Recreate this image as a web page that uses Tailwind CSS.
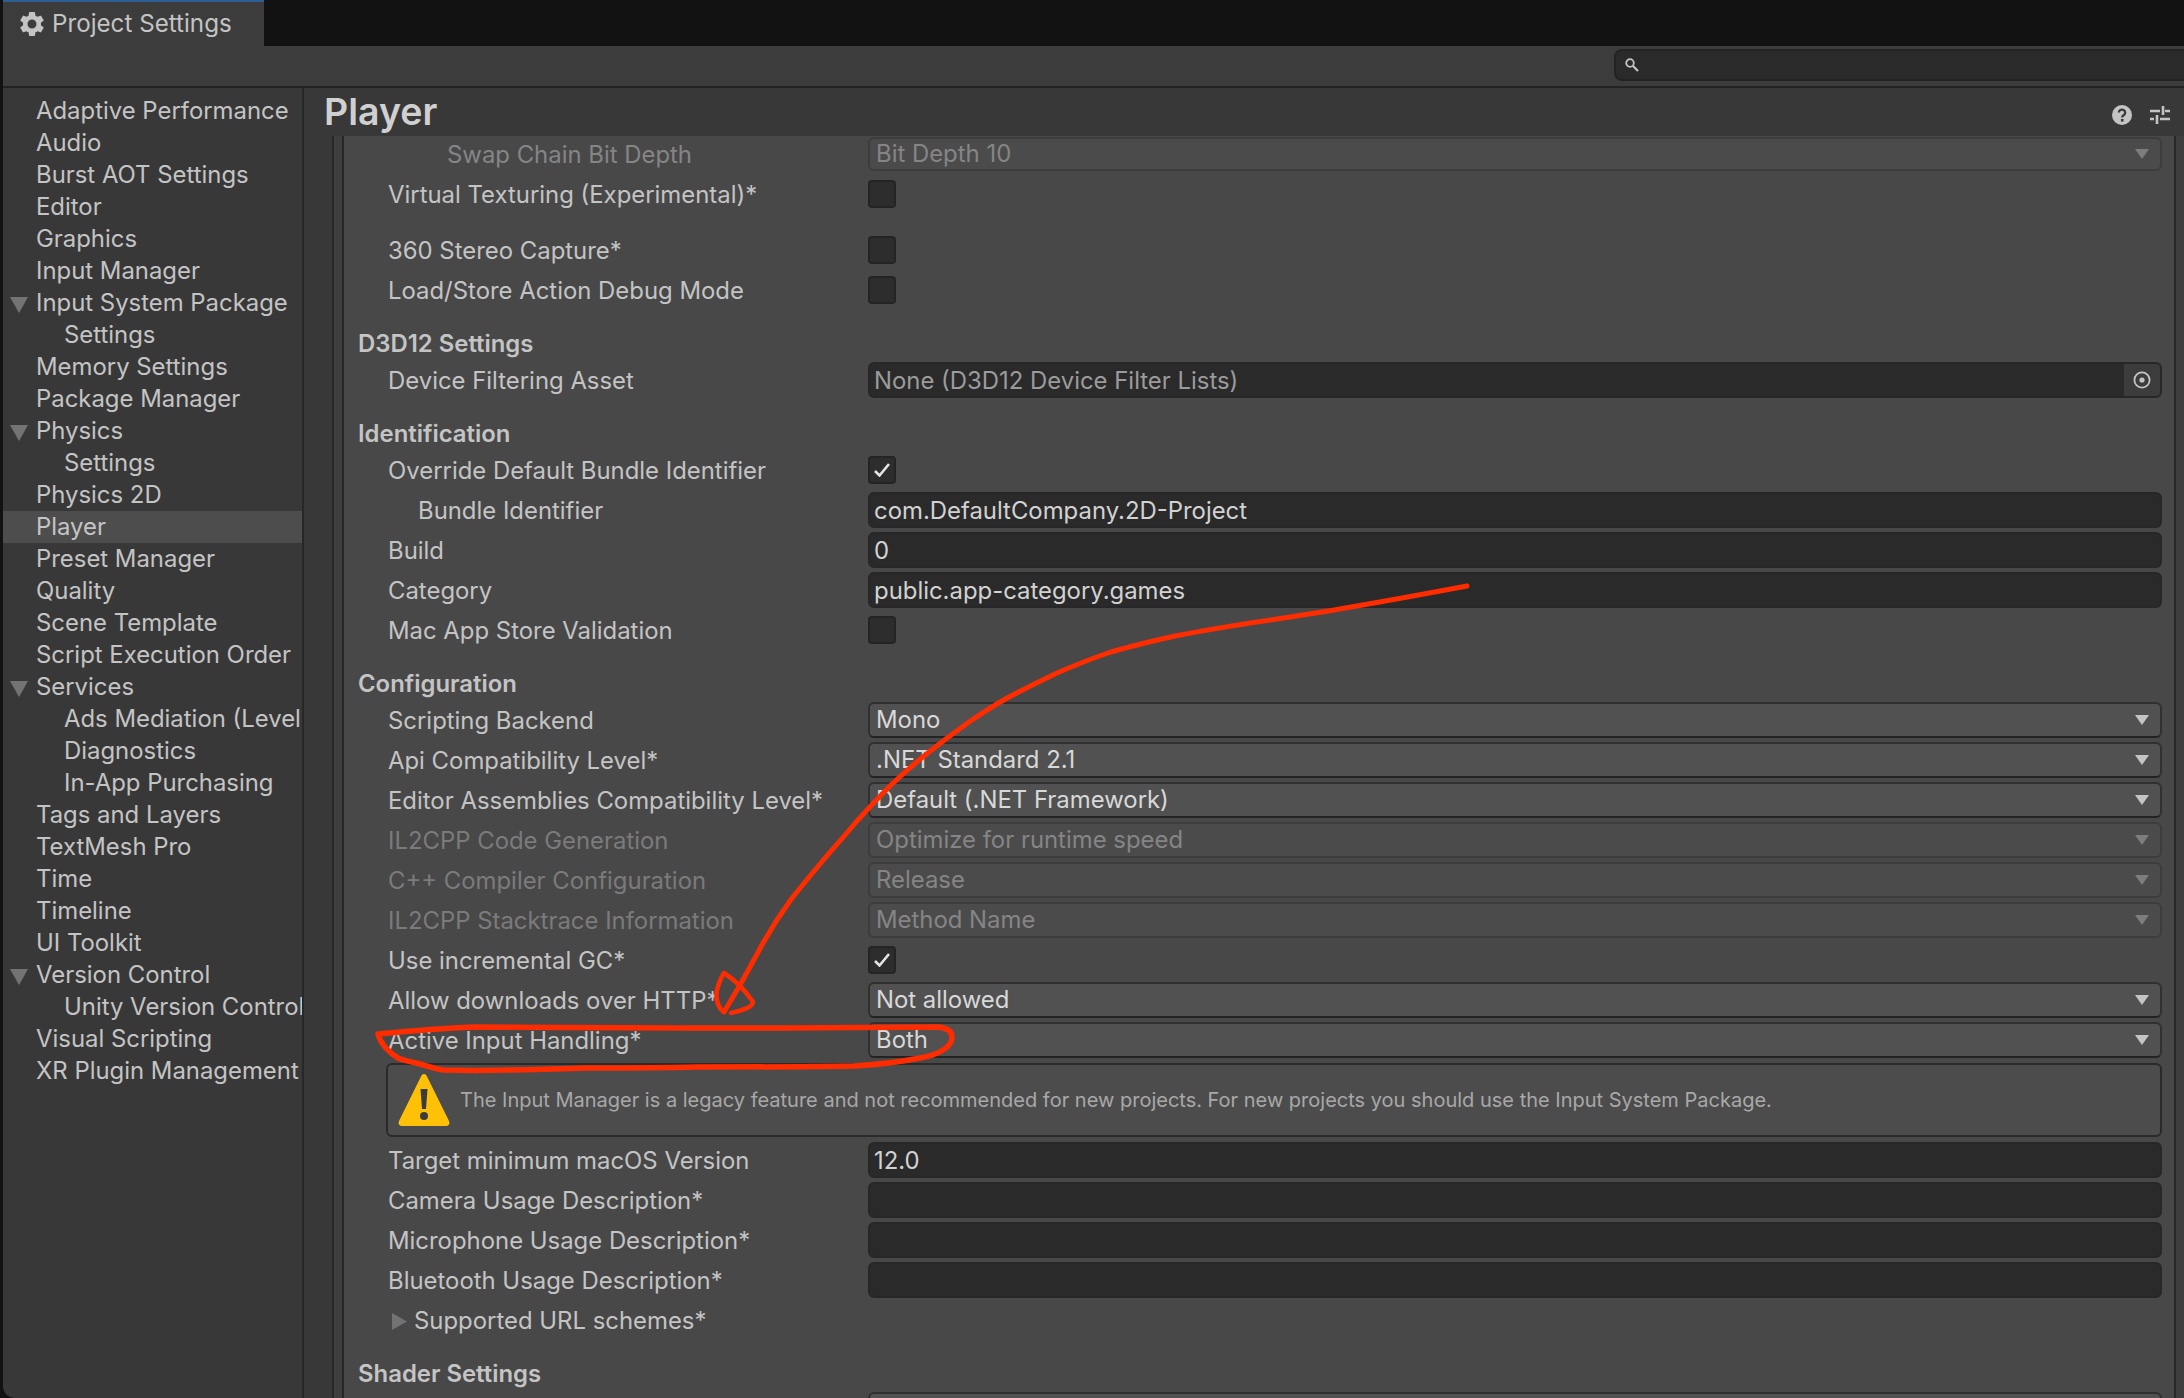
<!DOCTYPE html>
<html lang="en">
<head>
    <meta charset="utf-8"/>
    <title>Project Settings</title>
    <script src="https://cdn.jsdelivr.net/npm/@tailwindcss/browser@4"></script>
</head>
<body class="bg-[#2a2a2a]">
<div class="relative w-[2184px] h-[1398px] overflow-hidden font-[Inter,sans-serif] antialiased text-[#c4c4c4] bg-[#121212]">

    <!-- window -->
    <div class="flex flex-col h-full ml-[3px] rounded-bl-[12px] overflow-hidden">
        <!-- tab strip -->
        <div class="flex h-[46px] shrink-0 bg-[#121212]">
            <div class="w-[261px] bg-[#3c3c3c] border-t-2 border-[#2c5d93] flex items-center pl-[14px] gap-[5px]">
                <svg class="w-[30px] h-[30px]" viewBox="0 0 24 24" fill="#c4c4c4"><path d="M19.14 12.94c.04-.3.06-.61.06-.94 0-.32-.02-.64-.07-.94l2.03-1.58c.18-.14.23-.41.12-.61l-1.92-3.32c-.12-.22-.37-.29-.59-.22l-2.39.96c-.5-.38-1.03-.7-1.62-.94l-.36-2.54c-.04-.24-.24-.41-.48-.41h-3.84c-.24 0-.43.17-.47.41l-.36 2.54c-.59.24-1.13.57-1.62.94l-2.39-.96c-.22-.08-.47 0-.59.22L2.74 8.87c-.12.21-.08.47.12.61l2.03 1.58c-.05.3-.09.63-.09.94s.02.64.07.94l-2.03 1.58c-.18.14-.23.41-.12.61l1.92 3.32c.12.22.37.29.59.22l2.39-.96c.5.38 1.03.7 1.62.94l.36 2.54c.05.24.24.41.48.41h3.84c.24 0 .44-.17.47-.41l.36-2.54c.59-.24 1.13-.56 1.62-.94l2.39.96c.22.08.47 0 .59-.22l1.92-3.32c.12-.22.07-.47-.12-.61l-2.01-1.58zM12 15.6c-1.98 0-3.6-1.62-3.6-3.6s1.62-3.6 3.6-3.6 3.6 1.62 3.6 3.6-1.62 3.6-3.6 3.6z"/></svg>
                <span class="text-[24.2px]">Project Settings</span>
            </div>
        </div>
        <!-- toolbar -->
        <div class="flex items-center justify-end h-[42px] shrink-0 bg-[#3c3c3c] border-b-2 border-[#232323]">
            <div class="flex items-center w-[570px] h-[32px] -mt-[2px] pl-[8px] bg-[#2a2a2a] border-2 border-r-0 border-[#232323] rounded-l-[8px]">
                <svg class="w-[16px] h-[16px]" viewBox="0 0 16 16" fill="none" stroke="#c4c4c4"><circle cx="6" cy="6" r="3.8" stroke-width="1.8"/><path d="M9 9l5 5" stroke-width="2.2"/></svg>
            </div>
        </div>

        <div class="flex flex-1 min-h-0">
            <!-- sidebar -->
            <div class="w-[301px] shrink-0 bg-[#383838] border-r-2 border-[#272727] pt-[7px] text-[23.9px] whitespace-nowrap overflow-hidden">
                <div class="flex h-8 items-center pl-[33px]">Adaptive Performance</div>
                <div class="flex h-8 items-center pl-[33px]">Audio</div>
                <div class="flex h-8 items-center pl-[33px]">Burst AOT Settings</div>
                <div class="flex h-8 items-center pl-[33px]">Editor</div>
                <div class="flex h-8 items-center pl-[33px]">Graphics</div>
                <div class="flex h-8 items-center pl-[33px]">Input Manager</div>
                <div class="flex h-8 items-center pl-[7px]"><svg class="w-[18px] h-[16px] mr-[8px] mt-[3px]" viewBox="0 0 18 16"><path d="M0 0h18L9 16z" fill="#737373"/></svg>Input System Package</div>
                <div class="flex h-8 items-center pl-[61px]">Settings</div>
                <div class="flex h-8 items-center pl-[33px]">Memory Settings</div>
                <div class="flex h-8 items-center pl-[33px]">Package Manager</div>
                <div class="flex h-8 items-center pl-[7px]"><svg class="w-[18px] h-[16px] mr-[8px] mt-[3px]" viewBox="0 0 18 16"><path d="M0 0h18L9 16z" fill="#737373"/></svg>Physics</div>
                <div class="flex h-8 items-center pl-[61px]">Settings</div>
                <div class="flex h-8 items-center pl-[33px]">Physics 2D</div>
                <div class="flex h-8 items-center pl-[33px] bg-[#4d4d4d]">Player</div>
                <div class="flex h-8 items-center pl-[33px]">Preset Manager</div>
                <div class="flex h-8 items-center pl-[33px]">Quality</div>
                <div class="flex h-8 items-center pl-[33px]">Scene Template</div>
                <div class="flex h-8 items-center pl-[33px]">Script Execution Order</div>
                <div class="flex h-8 items-center pl-[7px]"><svg class="w-[18px] h-[16px] mr-[8px] mt-[3px]" viewBox="0 0 18 16"><path d="M0 0h18L9 16z" fill="#737373"/></svg>Services</div>
                <div class="flex h-8 items-center pl-[61px]">Ads Mediation (Level</div>
                <div class="flex h-8 items-center pl-[61px]">Diagnostics</div>
                <div class="flex h-8 items-center pl-[61px]">In-App Purchasing</div>
                <div class="flex h-8 items-center pl-[33px]">Tags and Layers</div>
                <div class="flex h-8 items-center pl-[33px]">TextMesh Pro</div>
                <div class="flex h-8 items-center pl-[33px]">Time</div>
                <div class="flex h-8 items-center pl-[33px]">Timeline</div>
                <div class="flex h-8 items-center pl-[33px]">UI Toolkit</div>
                <div class="flex h-8 items-center pl-[7px]"><svg class="w-[18px] h-[16px] mr-[8px] mt-[3px]" viewBox="0 0 18 16"><path d="M0 0h18L9 16z" fill="#737373"/></svg>Version Control</div>
                <div class="flex h-8 items-center pl-[61px]">Unity Version Control</div>
                <div class="flex h-8 items-center pl-[33px]">Visual Scripting</div>
                <div class="flex h-8 items-center pl-[33px]">XR Plugin Management</div>
            </div>

            <!-- main -->
            <div class="flex flex-col flex-1 min-w-0 bg-[#383838]">
                <div class="flex items-center justify-between h-[48px] shrink-0 pl-[20px] pr-[14px]">
                    <span class="text-[37.5px] font-semibold text-[#d0d0d0]">Player</span>
                    <div class="flex items-center gap-[18px] mt-[6px]">
                        <svg class="w-[20px] h-[20px]" viewBox="0 0 20 20"><circle cx="10" cy="10" r="10" fill="#c4c4c4"/><path d="M6.800 7.600a3.200 3 0 1 1 4.800 2.600c-1 .6-1.400 1-1.400 2.200" fill="none" stroke="#383838" stroke-width="2.200"/><rect x="8.900" y="14" width="2.600" height="2.600" fill="#383838"/></svg>
                        <svg class="w-[20px] h-[20px]" viewBox="0 0 20 20" stroke="#c4c4c4" stroke-width="2.600" fill="none"><path d="M0 6h10M13 1v9M15 6h5M0 14h4M7 10v9M10 14h10"/></svg>
                    </div>
                </div>
                <div class="flex flex-1 min-h-0 pl-[28px] bg-[#383838]">
                    <div class="flex flex-1 min-w-0 border-l-2 border-[#272727] pl-[8px] bg-[#3e3e3e]">
                        <!-- inspector panel -->
                        <div class="w-[1834px] border-l-2 border-r-2 border-[#272727] bg-[#484848] overflow-hidden text-[23.9px]">

                            <div class="flex h-[36px] items-center pl-[44px] pr-[12px]">
                                <div class="w-[480px] shrink-0 pt-[2px] pl-[59px] text-[#858585]">Swap Chain Bit Depth</div>
                                <div class="flex-1 flex items-center justify-between h-[34px] pl-[6px] pr-[11px] bg-[#4b4b4b] border-2 border-[#3d3d3d] rounded-[6px] text-[#858585]">Bit Depth 10<svg class="w-[14px] h-[10px]" viewBox="0 0 14 10"><path d="M0 0h14L7 10z" fill="#7d7d7d"/></svg></div>
                            </div>
                            <div class="flex h-10 items-center mt-[2px] pl-[44px] pr-[12px]">
                                <div class="w-[480px] shrink-0 pt-[2px]">Virtual Texturing (Experimental)*</div>
                                <div class="w-[28px] h-[28px] bg-[#2d2d2d] border-2 border-[#242424] rounded-[4px]"></div>
                            </div>
                            <div class="flex h-10 items-center mt-4 pl-[44px] pr-[12px]">
                                <div class="w-[480px] shrink-0 pt-[2px]">360 Stereo Capture*</div>
                                <div class="w-[28px] h-[28px] bg-[#2d2d2d] border-2 border-[#242424] rounded-[4px]"></div>
                            </div>
                            <div class="flex h-10 items-center pl-[44px] pr-[12px]">
                                <div class="w-[480px] shrink-0 pt-[2px]">Load/Store Action Debug Mode</div>
                                <div class="w-[28px] h-[28px] bg-[#2d2d2d] border-2 border-[#242424] rounded-[4px]"></div>
                            </div>

                            <div class="flex h-[34px] items-center mt-4 pt-[2px] pl-[14px] font-semibold">D3D12 Settings</div>
                            <div class="flex h-10 items-center pl-[44px] pr-[12px]">
                                <div class="w-[480px] shrink-0 pt-[2px]">Device Filtering Asset</div>
                                <div class="flex-1 flex items-center justify-between h-[36px] pl-[4px] bg-[#2a2a2a] border-2 border-[#272727] rounded-[6px] overflow-hidden text-[#9b9b9b]"><span class="pt-[2px]">None (D3D12 Device Filter Lists)</span>
                                    <div class="flex items-center justify-center w-[36px] h-full bg-[#3c3c3c]"><svg class="w-[18px] h-[18px]" viewBox="0 0 18 18" fill="none"><circle cx="9" cy="9" r="7.600" stroke="#c4c4c4" stroke-width="1.800"/><circle cx="9" cy="9" r="2.600" fill="#c4c4c4"/></svg></div>
                                </div>
                            </div>

                            <div class="flex h-[34px] items-center mt-4 pt-[2px] pl-[14px] font-semibold">Identification</div>
                            <div class="flex h-10 items-center pl-[44px] pr-[12px]">
                                <div class="w-[480px] shrink-0 pt-[2px]">Override Default Bundle Identifier</div>
                                <div class="flex items-center justify-center w-[28px] h-[28px] bg-[#2d2d2d] border-2 border-[#242424] rounded-[4px]"><svg class="w-[16px] h-[14px]" viewBox="0 0 16 14" fill="none"><path d="M1 8l4.500 4.500L15 1" stroke="#e4e4e4" stroke-width="2.600"/></svg></div>
                            </div>
                            <div class="flex h-10 items-center pl-[44px] pr-[12px]">
                                <div class="w-[480px] shrink-0 pt-[2px] pl-[30px]">Bundle Identifier</div>
                                <div class="flex-1 flex items-center h-[36px] pt-[2px] pl-[4px] bg-[#2a2a2a] border-2 border-[#272727] rounded-[6px] text-[#d2d2d2]">com.DefaultCompany.2D-Project</div>
                            </div>
                            <div class="flex h-10 items-center pl-[44px] pr-[12px]">
                                <div class="w-[480px] shrink-0 pt-[2px]">Build</div>
                                <div class="flex-1 flex items-center h-[36px] pt-[2px] pl-[4px] bg-[#2a2a2a] border-2 border-[#272727] rounded-[6px] text-[#d2d2d2]">0</div>
                            </div>
                            <div class="flex h-10 items-center pl-[44px] pr-[12px]">
                                <div class="w-[480px] shrink-0 pt-[2px]">Category</div>
                                <div class="flex-1 flex items-center h-[36px] pt-[2px] pl-[4px] bg-[#2a2a2a] border-2 border-[#272727] rounded-[6px] text-[#d2d2d2]">public.app-category.games</div>
                            </div>
                            <div class="flex h-10 items-center pl-[44px] pr-[12px]">
                                <div class="w-[480px] shrink-0 pt-[2px]">Mac App Store Validation</div>
                                <div class="w-[28px] h-[28px] bg-[#2d2d2d] border-2 border-[#242424] rounded-[4px]"></div>
                            </div>

                            <div class="flex h-[34px] items-center mt-4 pt-[2px] pl-[14px] font-semibold">Configuration</div>
                            <div class="flex h-10 items-center pl-[44px] pr-[12px]">
                                <div class="w-[480px] shrink-0 pt-[2px]">Scripting Backend</div>
                                <div class="flex-1 flex items-center justify-between h-[36px] pl-[6px] pr-[11px] bg-[#515151] border-2 border-[#303030] border-b-[#232323] rounded-[6px] text-[#d8d8d8]">Mono<svg class="w-[14px] h-[10px]" viewBox="0 0 14 10"><path d="M0 0h14L7 10z" fill="#c4c4c4"/></svg></div>
                            </div>
                            <div class="flex h-10 items-center pl-[44px] pr-[12px]">
                                <div class="w-[480px] shrink-0 pt-[2px]">Api Compatibility Level*</div>
                                <div class="flex-1 flex items-center justify-between h-[36px] pl-[6px] pr-[11px] bg-[#515151] border-2 border-[#303030] border-b-[#232323] rounded-[6px] text-[#d8d8d8]">.NET Standard 2.1<svg class="w-[14px] h-[10px]" viewBox="0 0 14 10"><path d="M0 0h14L7 10z" fill="#c4c4c4"/></svg></div>
                            </div>
                            <div class="flex h-10 items-center pl-[44px] pr-[12px]">
                                <div class="w-[480px] shrink-0 pt-[2px]">Editor Assemblies Compatibility Level*</div>
                                <div class="flex-1 flex items-center justify-between h-[36px] pl-[6px] pr-[11px] bg-[#515151] border-2 border-[#303030] border-b-[#232323] rounded-[6px] text-[#d8d8d8]">Default (.NET Framework)<svg class="w-[14px] h-[10px]" viewBox="0 0 14 10"><path d="M0 0h14L7 10z" fill="#c4c4c4"/></svg></div>
                            </div>
                            <div class="flex h-10 items-center pl-[44px] pr-[12px]">
                                <div class="w-[480px] shrink-0 pt-[2px] text-[#7b7b7b]">IL2CPP Code Generation</div>
                                <div class="flex-1 flex items-center justify-between h-[36px] pl-[6px] pr-[11px] bg-[#4b4b4b] border-2 border-[#3d3d3d] rounded-[6px] text-[#858585]">Optimize for runtime speed<svg class="w-[14px] h-[10px]" viewBox="0 0 14 10"><path d="M0 0h14L7 10z" fill="#7d7d7d"/></svg></div>
                            </div>
                            <div class="flex h-10 items-center pl-[44px] pr-[12px]">
                                <div class="w-[480px] shrink-0 pt-[2px] text-[#7b7b7b]">C++ Compiler Configuration</div>
                                <div class="flex-1 flex items-center justify-between h-[36px] pl-[6px] pr-[11px] bg-[#4b4b4b] border-2 border-[#3d3d3d] rounded-[6px] text-[#858585]">Release<svg class="w-[14px] h-[10px]" viewBox="0 0 14 10"><path d="M0 0h14L7 10z" fill="#7d7d7d"/></svg></div>
                            </div>
                            <div class="flex h-10 items-center pl-[44px] pr-[12px]">
                                <div class="w-[480px] shrink-0 pt-[2px] text-[#7b7b7b]">IL2CPP Stacktrace Information</div>
                                <div class="flex-1 flex items-center justify-between h-[36px] pl-[6px] pr-[11px] bg-[#4b4b4b] border-2 border-[#3d3d3d] rounded-[6px] text-[#858585]">Method Name<svg class="w-[14px] h-[10px]" viewBox="0 0 14 10"><path d="M0 0h14L7 10z" fill="#7d7d7d"/></svg></div>
                            </div>
                            <div class="flex h-10 items-center pl-[44px] pr-[12px]">
                                <div class="w-[480px] shrink-0 pt-[2px]">Use incremental GC*</div>
                                <div class="flex items-center justify-center w-[28px] h-[28px] bg-[#2d2d2d] border-2 border-[#242424] rounded-[4px]"><svg class="w-[16px] h-[14px]" viewBox="0 0 16 14" fill="none"><path d="M1 8l4.500 4.500L15 1" stroke="#e4e4e4" stroke-width="2.600"/></svg></div>
                            </div>
                            <div class="flex h-10 items-center pl-[44px] pr-[12px]">
                                <div class="w-[480px] shrink-0 pt-[2px]">Allow downloads over HTTP*</div>
                                <div class="flex-1 flex items-center justify-between h-[36px] pl-[6px] pr-[11px] bg-[#515151] border-2 border-[#303030] border-b-[#232323] rounded-[6px] text-[#d8d8d8]">Not allowed<svg class="w-[14px] h-[10px]" viewBox="0 0 14 10"><path d="M0 0h14L7 10z" fill="#c4c4c4"/></svg></div>
                            </div>
                            <div class="flex h-10 items-center pl-[44px] pr-[12px]">
                                <div class="w-[480px] shrink-0 pt-[2px]">Active Input Handling*</div>
                                <div class="flex-1 flex items-center justify-between h-[36px] pl-[6px] pr-[11px] bg-[#515151] border-2 border-[#303030] border-b-[#232323] rounded-[6px] text-[#d8d8d8]">Both<svg class="w-[14px] h-[10px]" viewBox="0 0 14 10"><path d="M0 0h14L7 10z" fill="#c4c4c4"/></svg></div>
                            </div>

                            <!-- help box -->
                            <div class="flex items-center h-[74px] mt-[3px] ml-[42px] mr-[12px] pl-[10px] gap-[10px] bg-[#4c4c4c] border-2 border-[#2a2a2a] rounded-[6px] text-[20px] text-[#a8a8a8]">
                                <svg class="w-[52px] h-[52px] shrink-0" viewBox="0 0 52 52"><path d="M26 0c1.500 0 2.300 1 3 2.500L51 47c1 2.500 0 5-3 5H4c-3 0-4-2.500-3-5L23 2.500C23.700 1 24.500 0 26 0z" fill="#ffc107"/><path d="M22.500 15h7l-1.500 20h-4z" fill="#3c3c3c"/><circle cx="26" cy="42" r="4" fill="#3c3c3c"/></svg>
                                <span>The Input Manager is a legacy feature and not recommended for new projects. For new projects you should use the Input System Package.</span>
                            </div>

                            <div class="flex h-10 items-center mt-[3px] pl-[44px] pr-[12px]">
                                <div class="w-[480px] shrink-0 pt-[2px]">Target minimum macOS Version</div>
                                <div class="flex-1 flex items-center h-[36px] pt-[2px] pl-[4px] bg-[#2a2a2a] border-2 border-[#272727] rounded-[6px] text-[#d2d2d2]">12.0</div>
                            </div>
                            <div class="flex h-10 items-center pl-[44px] pr-[12px]">
                                <div class="w-[480px] shrink-0 pt-[2px]">Camera Usage Description*</div>
                                <div class="flex-1 h-[36px] bg-[#2a2a2a] border-2 border-[#272727] rounded-[6px]"></div>
                            </div>
                            <div class="flex h-10 items-center pl-[44px] pr-[12px]">
                                <div class="w-[480px] shrink-0 pt-[2px]">Microphone Usage Description*</div>
                                <div class="flex-1 h-[36px] bg-[#2a2a2a] border-2 border-[#272727] rounded-[6px]"></div>
                            </div>
                            <div class="flex h-10 items-center pl-[44px] pr-[12px]">
                                <div class="w-[480px] shrink-0 pt-[2px]">Bluetooth Usage Description*</div>
                                <div class="flex-1 h-[36px] bg-[#2a2a2a] border-2 border-[#272727] rounded-[6px]"></div>
                            </div>
                            <div class="flex h-10 items-center pt-[2px] pl-[48px] pr-[12px]">
                                <svg class="w-[15px] h-[17px] mr-[7px]" viewBox="0 0 15 17"><path d="M0 0l15 8.500L0 17z" fill="#737373"/></svg>Supported URL schemes*
                            </div>

                            <div class="flex h-[34px] items-center mt-4 pt-[2px] pl-[14px] font-semibold">Shader Settings</div>
                            <div class="flex h-10 items-center pl-[44px] pr-[12px]">
                                <div class="w-[480px] shrink-0"></div>
                                <div class="flex-1 h-[36px] bg-[#515151] border-2 border-[#303030] rounded-[6px]"></div>
                            </div>
                        </div>
                    </div>
                </div>
            </div>
        </div>
    </div>

    <!-- red annotation drawn over the window -->
    <svg class="absolute inset-0 w-[2184px] h-[1398px] pointer-events-none" viewBox="0 0 2184 1398" fill="none" stroke="#ff2c00" stroke-linecap="round" stroke-linejoin="round">
        <path stroke-width="5" d="M1467 586Q1339 610 1277 619Q1216 628 1175 636Q1135 645 1111 652Q1087 660 1057 673Q1028 687 1009 697Q991 707 969 722Q948 737 929 752Q910 767 891 785Q873 803 857 821Q841 840 825 858Q809 877 792 898Q776 920 763 943Q750 967 740 985L724 1012"/>
        <path stroke-width="4.500" d="M724 1012C718 1008 715 998 717 990C719 982 722 976 724 973C735 980 745 990 753 1002C752 1008 742 1010 731 1013"/>
        <path stroke-width="5.500" d="M378 1034C420 1030 450 1028 474 1027C550 1028 680 1028 786 1028C850 1028 900 1027 938 1027C948 1028 952 1032 952 1037C952 1043 948 1047 943 1050C935 1055 930 1056 920 1058C890 1064 870 1065 853 1066C800 1067 750 1067 697 1067C660 1068 620 1068 585 1068C530 1070 480 1071 443 1070C430 1068 425 1065 416 1063C408 1061 402 1060 398 1058C391 1054 388 1050 385 1047C381 1042 379 1038 378 1034"/>
    </svg>
</div>
</body>
</html>
